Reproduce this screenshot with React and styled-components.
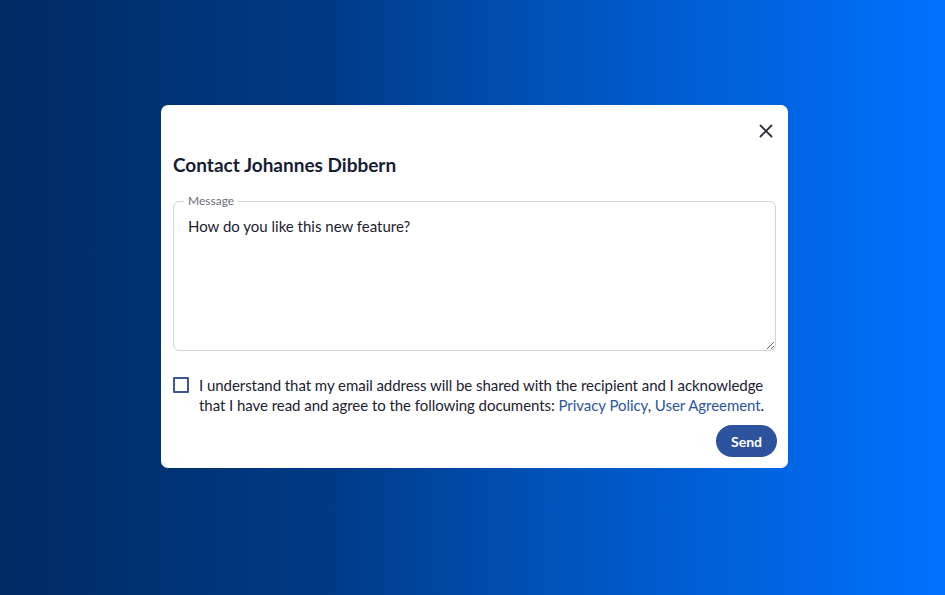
import React from "react";
import styled, { createGlobalStyle } from "styled-components";

const GlobalStyle = createGlobalStyle`
    html, body {
        margin: 0;
        padding: 0;
    }
    body {
        font-family: Lato, "Open Sans", "Liberation Sans", sans-serif;
    }
`;

export default function App() {
    return (
        <Page>
            <GlobalStyle />
            <Modal>
                <TopBar>
                    <CloseButton aria-label="Close">
                        <svg width="14" height="14" viewBox="0 0 14 14">
                            <path
                                d="M1.5 1.5 L12.5 12.5 M12.5 1.5 L1.5 12.5"
                                stroke="#2a2f3a"
                                strokeWidth="1.8"
                                strokeLinecap="round"
                            />
                        </svg>
                    </CloseButton>
                </TopBar>
                <Title>Contact Johannes Dibbern</Title>
                <Field>
                    <Legend>Message</Legend>
                    <MessageInput defaultValue="How do you like this new feature?" />
                </Field>
                <ConsentRow>
                    <CheckBox type="checkbox" />
                    <ConsentText>
                        I understand that my email address will be shared with
                        the recipient and I acknowledge that I have read and
                        agree to the following documents:{" "}
                        <DocLink href="#">Privacy Policy</DocLink>,{" "}
                        <DocLink href="#">User Agreement</DocLink>.
                    </ConsentText>
                </ConsentRow>
                <Footer>
                    <SendButton>Send</SendButton>
                </Footer>
            </Modal>
        </Page>
    );
}

const Page = styled.div`
    width: 945px;
    height: 595px;
    box-sizing: border-box;
    padding: 105px 0 0 161px;
    background: linear-gradient(90deg, #002a62 0%, #003a86 35%, #0054bd 60%, #0072ff 100%);
    overflow: hidden;
`;

const Modal = styled.div`
    width: 627px;
    height: 363px;
    box-sizing: border-box;
    padding: 12px 11px 11px 12px;
    background: #ffffff;
    border-radius: 7px;
    display: flex;
    flex-direction: column;
`;

const TopBar = styled.div`
    display: flex;
    justify-content: flex-end;
    height: 28px;
`;

const CloseButton = styled.button`
    width: 24px;
    height: 24px;
    margin-top: 2px;
    margin-right: -1px;
    padding: 0;
    border: none;
    background: none;
    display: flex;
    align-items: center;
    justify-content: center;
    cursor: pointer;
`;

const Title = styled.h2`
    margin: 8px 0 0 0;
    font-size: 19px;
    line-height: 24px;
    font-weight: 700;
    color: #161d33;
`;

const Field = styled.fieldset`
    margin: 16px 1px 0 0;
    padding: 0;
    border: 1px solid #d2d4d8;
    border-radius: 6px;
    box-sizing: border-box;
`;

const Legend = styled.legend`
    margin-left: 10px;
    padding: 0 4px;
    font-size: 12px;
    line-height: 16px;
    color: #6b6f78;
`;

const MessageInput = styled.textarea`
    display: block;
    width: 100%;
    height: 141px;
    box-sizing: border-box;
    margin: 0;
    border: none;
    outline: none;
    resize: vertical;
    background: transparent;
    border-radius: 6px;
    padding: 7px 14px;
    font-family: Lato, "Open Sans", "Liberation Sans", sans-serif;
    font-size: 15px;
    line-height: 20px;
    color: #1c2230;
`;

const ConsentRow = styled.div`
    display: flex;
    align-items: flex-start;
    gap: 10px;
    margin-top: 25px;
`;

const CheckBox = styled.input`
    appearance: none;
    flex-shrink: 0;
    width: 16px;
    height: 16px;
    margin: 1px 0 0 0;
    border: 2px solid #3a5897;
    border-radius: 1px;
    box-sizing: border-box;
    background: #fff;
`;

const ConsentText = styled.p`
    margin: 0;
    font-size: 15px;
    line-height: 19.5px;
    letter-spacing: -0.05px;
    color: #1c2230;
`;

const DocLink = styled.a`
    color: #2c55a2;
    text-decoration: none;
`;

const Footer = styled.div`
    margin-top: auto;
    display: flex;
    justify-content: flex-end;
`;

const SendButton = styled.button`
    height: 32px;
    padding: 0 15px;
    border: none;
    border-radius: 16px;
    background: #2d539f;
    color: #ffffff;
    font-family: Lato, "Open Sans", "Liberation Sans", sans-serif;
    font-size: 14px;
    font-weight: 700;
    cursor: pointer;
`;
